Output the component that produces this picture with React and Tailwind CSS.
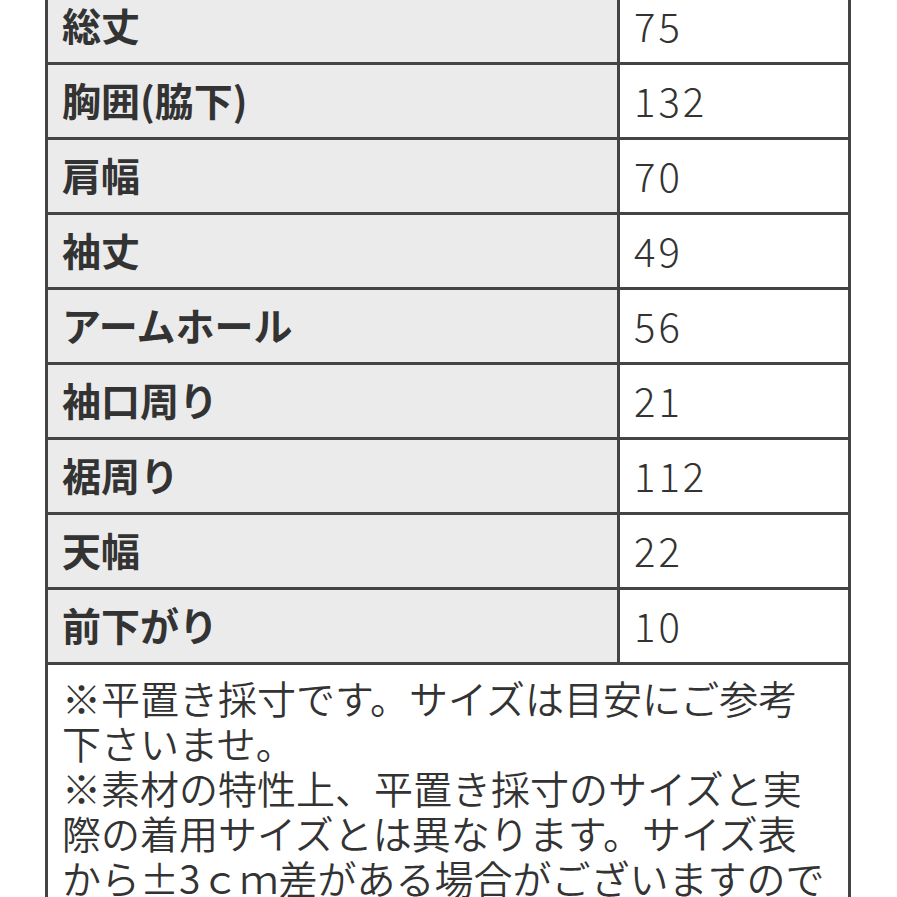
import React from 'react';

const rows = [
  { label: '総丈', value: '75' },
  { label: '胸囲(脇下)', value: '132' },
  { label: '肩幅', value: '70' },
  { label: '袖丈', value: '49' },
  { label: 'アームホール', value: '56' },
  { label: '袖口周り', value: '21' },
  { label: '裾周り', value: '112' },
  { label: '天幅', value: '22' },
  { label: '前下がり', value: '10' },
];

const notes = [
  '※平置き採寸です。サイズは目安にご参考',
  '下さいませ。',
  '※素材の特性上、平置き採寸のサイズと実',
  '際の着用サイズとは異なります。サイズ表',
  'から±3ｃｍ差がある場合がございますので',
];

const App = () => {
  return (
    <div
      className="w-[897px] h-[897px] overflow-hidden bg-white text-[#333]"
      style={{ fontFamily: '"Noto Sans CJK JP", "Noto Sans", sans-serif' }}
    >
      {/* サイズ表 */}
      <div className="-mt-[13px] ml-[45px] w-[806px] border-[3px] border-[#444]">
        {rows.map(row => (
          <div key={row.label} className="flex h-[75px] border-b-[3px] border-[#444]">
            <div className="w-[572px] shrink-0 flex items-center pl-[14px] pb-[3px] bg-[#ebebeb] border-r-[3px] border-[#444] text-[39px] font-bold leading-none">
              {row.label}
            </div>
            <div className="flex-1 flex items-center pl-[14px] pb-[3px] bg-white text-[40px] font-light tracking-[3px] leading-none">
              {row.value}
            </div>
          </div>
        ))}

        {/* 注意書き */}
        <div className="bg-white px-[14px] pt-[10px] pb-[20px] text-[39px] font-[350] leading-[45px]">
          {notes.map(line => (
            <div key={line} className="whitespace-nowrap">{line}</div>
          ))}
        </div>
      </div>
    </div>
  );
};

export default App;
